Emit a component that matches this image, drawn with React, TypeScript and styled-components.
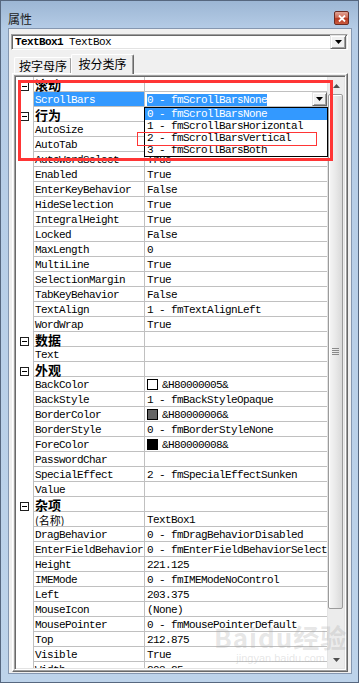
import React from 'react';
import styled, { createGlobalStyle } from 'styled-components';

const mono = `"Liberation Mono", "Noto Sans CJK SC", monospace`;
const cjk = `"Noto Sans CJK SC", "Liberation Sans", sans-serif`;

const GlobalStyle = createGlobalStyle`
  html, body {
    margin: 0;
    padding: 0;
    background: #ffffff;
  }
  body {
    width: 359px;
    height: 683px;
    overflow: hidden;
  }
`;

type Row =
  | { kind: 'cat'; label: string }
  | { kind: 'prop'; name: string; value?: string; swatch?: string; selected?: boolean };

// AutoSize / AutoTab values sit fully under the open dropdown, so they are left out
const rows: Row[] = [
  { kind: 'cat', label: '滚动' },
  { kind: 'prop', name: 'ScrollBars', value: '0 - fmScrollBarsNone', selected: true },
  { kind: 'cat', label: '行为' },
  { kind: 'prop', name: 'AutoSize' },
  { kind: 'prop', name: 'AutoTab' },
  { kind: 'prop', name: 'AutoWordSelect', value: 'True' },
  { kind: 'prop', name: 'Enabled', value: 'True' },
  { kind: 'prop', name: 'EnterKeyBehavior', value: 'False' },
  { kind: 'prop', name: 'HideSelection', value: 'True' },
  { kind: 'prop', name: 'IntegralHeight', value: 'True' },
  { kind: 'prop', name: 'Locked', value: 'False' },
  { kind: 'prop', name: 'MaxLength', value: '0' },
  { kind: 'prop', name: 'MultiLine', value: 'True' },
  { kind: 'prop', name: 'SelectionMargin', value: 'True' },
  { kind: 'prop', name: 'TabKeyBehavior', value: 'False' },
  { kind: 'prop', name: 'TextAlign', value: '1 - fmTextAlignLeft' },
  { kind: 'prop', name: 'WordWrap', value: 'True' },
  { kind: 'cat', label: '数据' },
  { kind: 'prop', name: 'Text' },
  { kind: 'cat', label: '外观' },
  { kind: 'prop', name: 'BackColor', value: '&H80000005&', swatch: '#ffffff' },
  { kind: 'prop', name: 'BackStyle', value: '1 - fmBackStyleOpaque' },
  { kind: 'prop', name: 'BorderColor', value: '&H80000006&', swatch: '#646464' },
  { kind: 'prop', name: 'BorderStyle', value: '0 - fmBorderStyleNone' },
  { kind: 'prop', name: 'ForeColor', value: '&H80000008&', swatch: '#000000' },
  { kind: 'prop', name: 'PasswordChar' },
  { kind: 'prop', name: 'SpecialEffect', value: '2 - fmSpecialEffectSunken' },
  { kind: 'prop', name: 'Value' },
  { kind: 'cat', label: '杂项' },
  { kind: 'prop', name: '(名称)', value: 'TextBox1' },
  { kind: 'prop', name: 'DragBehavior', value: '0 - fmDragBehaviorDisabled' },
  { kind: 'prop', name: 'EnterFieldBehavior', value: '0 - fmEnterFieldBehaviorSelect' },
  { kind: 'prop', name: 'Height', value: '221.125' },
  { kind: 'prop', name: 'IMEMode', value: '0 - fmIMEModeNoControl' },
  { kind: 'prop', name: 'Left', value: '203.375' },
  { kind: 'prop', name: 'MouseIcon', value: '(None)' },
  { kind: 'prop', name: 'MousePointer', value: '0 - fmMousePointerDefault' },
  { kind: 'prop', name: 'Top', value: '212.875' },
  { kind: 'prop', name: 'Visible', value: 'True' },
  { kind: 'prop', name: 'Width', value: '203.25' },
];

const listItems = [
  '0 - fmScrollBarsNone',
  '1 - fmScrollBarsHorizontal',
  '2 - fmScrollBarsVertical',
  '3 - fmScrollBarsBoth',
];

const Root = styled.div`
  position: relative;
  width: 359px;
  height: 683px;
  overflow: hidden;
`;

const Window = styled.div`
  box-sizing: border-box;
  width: 359px;
  height: 683px;
  border: 1px solid #56677f;
  background: linear-gradient(to bottom, #9cb6d4 0px, #b5cce6 28px, #bdd3ea 100%);
  padding: 0 6px 8px 7px;
  display: flex;
  flex-direction: column;
`;

const TitleBar = styled.div`
  height: 27px;
  flex-shrink: 0;
  display: flex;
  align-items: flex-start;
  justify-content: space-between;
`;

const Title = styled.div`
  margin-top: 10px;
  font-family: ${cjk};
  font-size: 12px;
  line-height: 15px;
  color: #1b1b1b;
`;

const CloseButton = styled.div`
  box-sizing: border-box;
  width: 15px;
  height: 14px;
  margin-top: 10px;
  margin-right: 3px;
  border: 1px solid #6b2b22;
  border-radius: 2px;
  background: linear-gradient(to bottom, #e0a597 0%, #cf6a55 45%, #b73a22 55%, #c85a3e 100%);
  display: flex;
  align-items: center;
  justify-content: center;
`;

const Client = styled.div`
  flex: 1;
  min-height: 0;
  display: flex;
  flex-direction: column;
  background: #f0f0f0;
  border: 1px solid #8597b0;
`;

const Combo = styled.div`
  box-sizing: border-box;
  height: 16px;
  flex-shrink: 0;
  margin: 5px 3px 0 2px;
  display: flex;
  align-items: center;
  background: #ffffff;
  border: 1px solid;
  border-color: #a0a0a0 #ffffff #ffffff #a0a0a0;
  box-shadow: inset 1px 1px #696969, inset -1px -1px #e3e3e3;
  padding: 0 1px 0 3px;
`;

const ComboText = styled.div`
  flex: 1;
  font-family: ${mono};
  font-size: 11px;
  letter-spacing: -0.6px;
  line-height: 13px;
  color: #000;
  white-space: pre;
`;

const Bold = styled.b`
  font-weight: bold;
`;

const DropButton = styled.div<{ $w: number; $h: number }>`
  box-sizing: border-box;
  width: ${({ $w }) => $w}px;
  height: ${({ $h }) => $h}px;
  background: #f0f0f0;
  border: 1px solid;
  border-color: #e3e3e3 #696969 #696969 #e3e3e3;
  box-shadow: inset 1px 1px #ffffff, inset -1px -1px #a0a0a0;
  display: flex;
  align-items: center;
  justify-content: center;
  flex-shrink: 0;
`;

const TabStrip = styled.div`
  height: 19px;
  flex-shrink: 0;
  margin-top: 4px;
  padding-left: 5px;
  display: flex;
  align-items: flex-end;
`;

const Tab = styled.div<{ $active?: boolean }>`
  position: relative;
  z-index: 1;
  box-sizing: border-box;
  width: ${({ $active }) => ($active ? 63 : 58)}px;
  height: ${({ $active }) => ($active ? 20 : 16)}px;
  margin-left: ${({ $active }) => ($active ? -1 : 0)}px;
  margin-bottom: ${({ $active }) => ($active ? -1 : 0)}px;
  background: #f0f0f0;
  border-top: 1px solid #ffffff;
  border-left: 1px solid #ffffff;
  border-right: 1px solid #696969;
  border-radius: 2px 2px 0 0;
  box-shadow: inset -1px 0 #a0a0a0;
  font-family: ${cjk};
  font-size: 12px;
  line-height: ${({ $active }) => ($active ? 17 : 15)}px;
  text-align: center;
  color: #000;
`;

const Panel = styled.div`
  flex: 1;
  min-height: 0;
  display: flex;
  margin: 0 3px 1px 3px;
  padding: 1px;
  border: 1px solid;
  border-color: #ffffff #696969 #696969 #ffffff;
  box-shadow: inset -1px -1px #a0a0a0;
`;

const Grid = styled.div`
  flex: 1;
  display: flex;
  overflow: hidden;
  background: #ffffff;
  border: 1px solid;
  border-color: #a0a0a0 #ffffff #ffffff #a0a0a0;
  box-shadow: inset 1px 1px #696969, inset -1px -1px #e3e3e3;
  padding: 1px;
  min-height: 0;
`;

const Rows = styled.div`
  flex: 1;
  overflow: hidden;
`;

const RowLine = styled.div`
  display: grid;
  grid-template-columns: 17px 111px 1fr;
  height: 15px;
`;

const Gutter = styled.div`
  display: flex;
  align-items: center;
  justify-content: center;
`;

const ExpandBox = styled.div`
  box-sizing: border-box;
  width: 9px;
  height: 9px;
  margin-top: 3px;
  margin-right: 1px;
  border: 1px solid #1e1e1e;
  background: #fff;
  display: flex;
  align-items: center;
  justify-content: center;

  &::after {
    content: '';
    width: 5px;
    height: 1px;
    background: #000;
  }
`;

const Cell = styled.div<{ $selected?: boolean }>`
  box-sizing: border-box;
  height: 15px;
  display: flex;
  align-items: center;
  border-left: 1px solid #c0c0c0;
  border-bottom: 1px solid #c0c0c0;
  padding: 2px 0 0 1px;
  overflow: hidden;
  white-space: pre;
  font-family: ${mono};
  font-size: 11px;
  letter-spacing: -0.6px;
  color: ${({ $selected }) => ($selected ? '#ffffff' : '#000000')};
  background: ${({ $selected }) => ($selected ? '#3399ff' : '#ffffff')};
`;

const CatCell = styled(Cell)`
  overflow: visible;
  padding-top: 0;
`;

const ValueCell = styled(Cell)`
  padding-left: 2px;
  padding-right: 0;
`;

const ComboCell = styled(ValueCell)`
  padding-top: 0;
`;

const CatLabel = styled.span`
  font-family: ${cjk};
  font-size: 13px;
  font-weight: bold;
  letter-spacing: 0;
  line-height: 15px;
  margin-top: 1px;
  color: #000;
`;

const CjkName = styled.span`
  font-family: ${cjk};
  font-size: 11px;
  letter-spacing: 0;
`;

const Swatch = styled.span<{ $color: string }>`
  box-sizing: border-box;
  width: 11px;
  height: 11px;
  margin-right: 4px;
  margin-top: -2px;
  border: 1px solid #000;
  background: ${({ $color }) => $color};
  flex-shrink: 0;
`;

const Highlight = styled.span`
  background: #3399ff;
  color: #ffffff;
  line-height: 12px;
`;

const ComboValue = styled.div`
  flex: 1;
  padding-top: 1px;
`;

const ScrollBar = styled.div`
  width: 17px;
  display: flex;
  flex-direction: column;
  background: #ececec;
  border-left: 1px solid #e4e4e4;
  box-sizing: border-box;
`;

const ScrollArrow = styled.div`
  height: 17px;
  display: flex;
  align-items: center;
  justify-content: center;
  flex-shrink: 0;
`;

const Thumb = styled.div`
  box-sizing: border-box;
  height: 515px;
  margin: 0 1px 0 0;
  border: 1px solid #9b9b9b;
  border-radius: 2px;
  background: linear-gradient(to right, #f6f6f6 0%, #e9e9e9 50%, #d9d9d9 100%);
  box-shadow: inset 1px 1px #ffffff;
  display: flex;
  align-items: center;
  justify-content: center;
  flex-shrink: 0;
`;

const Grip = styled.div`
  width: 7px;
  height: 7px;
  background: repeating-linear-gradient(to bottom, #8a8a8a 0, #8a8a8a 1px, transparent 1px, transparent 2px);
`;

const Track = styled.div`
  flex: 1;
`;

const DropList = styled.div`
  position: absolute;
  left: 144px;
  top: 107px;
  width: 184px;
  box-sizing: border-box;
  border: 1px solid #000;
  background: #fff;
  z-index: 5;
`;

const ListItem = styled.div<{ $active?: boolean }>`
  height: 12px;
  line-height: 12px;
  padding-left: 2px;
  font-family: ${mono};
  font-size: 11px;
  letter-spacing: -0.6px;
  white-space: pre;
  color: ${({ $active }) => ($active ? '#fff' : '#000')};
  background: ${({ $active }) => ($active ? '#3399ff' : '#fff')};
`;

const Marker = styled.div<{ $x: number; $y: number; $w: number; $h: number; $b: number }>`
  position: absolute;
  left: ${({ $x }) => $x}px;
  top: ${({ $y }) => $y}px;
  width: ${({ $w }) => $w}px;
  height: ${({ $h }) => $h}px;
  box-sizing: border-box;
  border: ${({ $b }) => $b}px solid #ff3535;
  z-index: 6;
`;

const Watermark = styled.div`
  position: absolute;
  left: 214px;
  top: 622px;
  z-index: 4;
  color: rgba(170, 170, 170, 0.3);
  font-family: ${cjk};
  text-align: center;
  pointer-events: none;
`;

const WatermarkBig = styled.div`
  font-size: 26px;
  font-weight: bold;
  line-height: 30px;
  letter-spacing: 1px;
`;

const WatermarkSmall = styled.div`
  font-family: "Liberation Sans", sans-serif;
  font-size: 11px;
  line-height: 12px;
`;

const Triangle = ({ up, color = '#000' }: { up?: boolean; color?: string }) => (
  <svg width="7" height="4" viewBox="0 0 7 4">
    <polygon points={up ? '0,4 7,4 3.5,0' : '0,0 7,0 3.5,4'} fill={color} />
  </svg>
);

function PropRow({ row }: { row: Row }) {
  if (row.kind === 'cat') {
    return (
      <RowLine>
        <Gutter>
          <ExpandBox />
        </Gutter>
        <CatCell>
          <CatLabel>{row.label}</CatLabel>
        </CatCell>
        <ValueCell />
      </RowLine>
    );
  }
  const isCjk = /[\u4e00-\u9fff]/.test(row.name);
  return (
    <RowLine>
      <Gutter />
      <Cell $selected={row.selected}>{isCjk ? <CjkName>{row.name}</CjkName> : row.name}</Cell>
      {row.selected ? (
        <ComboCell>
          <ComboValue>
            <Highlight>{row.value}</Highlight>
          </ComboValue>
          <DropButton $w={15} $h={14}>
            <Triangle />
          </DropButton>
        </ComboCell>
      ) : (
        <ValueCell>
          {row.swatch && <Swatch $color={row.swatch} />}
          {row.value}
        </ValueCell>
      )}
    </RowLine>
  );
}

export default function App() {
  return (
    <Root>
      <GlobalStyle />
      <Window>
        <TitleBar>
          <Title>属性</Title>
          <CloseButton>
            <svg width="8" height="7" viewBox="0 0 8 7">
              <path d="M1 0.5 L7 6.5 M7 0.5 L1 6.5" stroke="#ffffff" strokeWidth="1.8" />
            </svg>
          </CloseButton>
        </TitleBar>
        <Client>
          <Combo>
            <ComboText>
              <Bold>TextBox1</Bold> TextBox
            </ComboText>
            <DropButton $w={16} $h={14}>
              <Triangle />
            </DropButton>
          </Combo>
          <TabStrip>
            <Tab>按字母序</Tab>
            <Tab $active>按分类序</Tab>
          </TabStrip>
          <Panel>
            <Grid>
              <Rows>
                {rows.map((row, i) => (
                  <PropRow key={i} row={row} />
                ))}
              </Rows>
              <ScrollBar>
                <ScrollArrow>
                  <Triangle up color="#505050" />
                </ScrollArrow>
                <Thumb>
                  <Grip />
                </Thumb>
                <Track />
                <ScrollArrow>
                  <Triangle color="#505050" />
                </ScrollArrow>
              </ScrollBar>
            </Grid>
          </Panel>
        </Client>
      </Window>

      <DropList>
        {listItems.map((item, i) => (
          <ListItem key={item} $active={i === 0}>
            {item}
          </ListItem>
        ))}
      </DropList>

      <Marker $x={18} $y={80} $w={315} $h={81} $b={3} />
      <Marker $x={137} $y={132} $w={180} $h={14} $b={1} />

      <Watermark>
        <WatermarkBig>Baidu经验</WatermarkBig>
        <WatermarkSmall>jingyan.baidu.com</WatermarkSmall>
      </Watermark>
    </Root>
  );
}
